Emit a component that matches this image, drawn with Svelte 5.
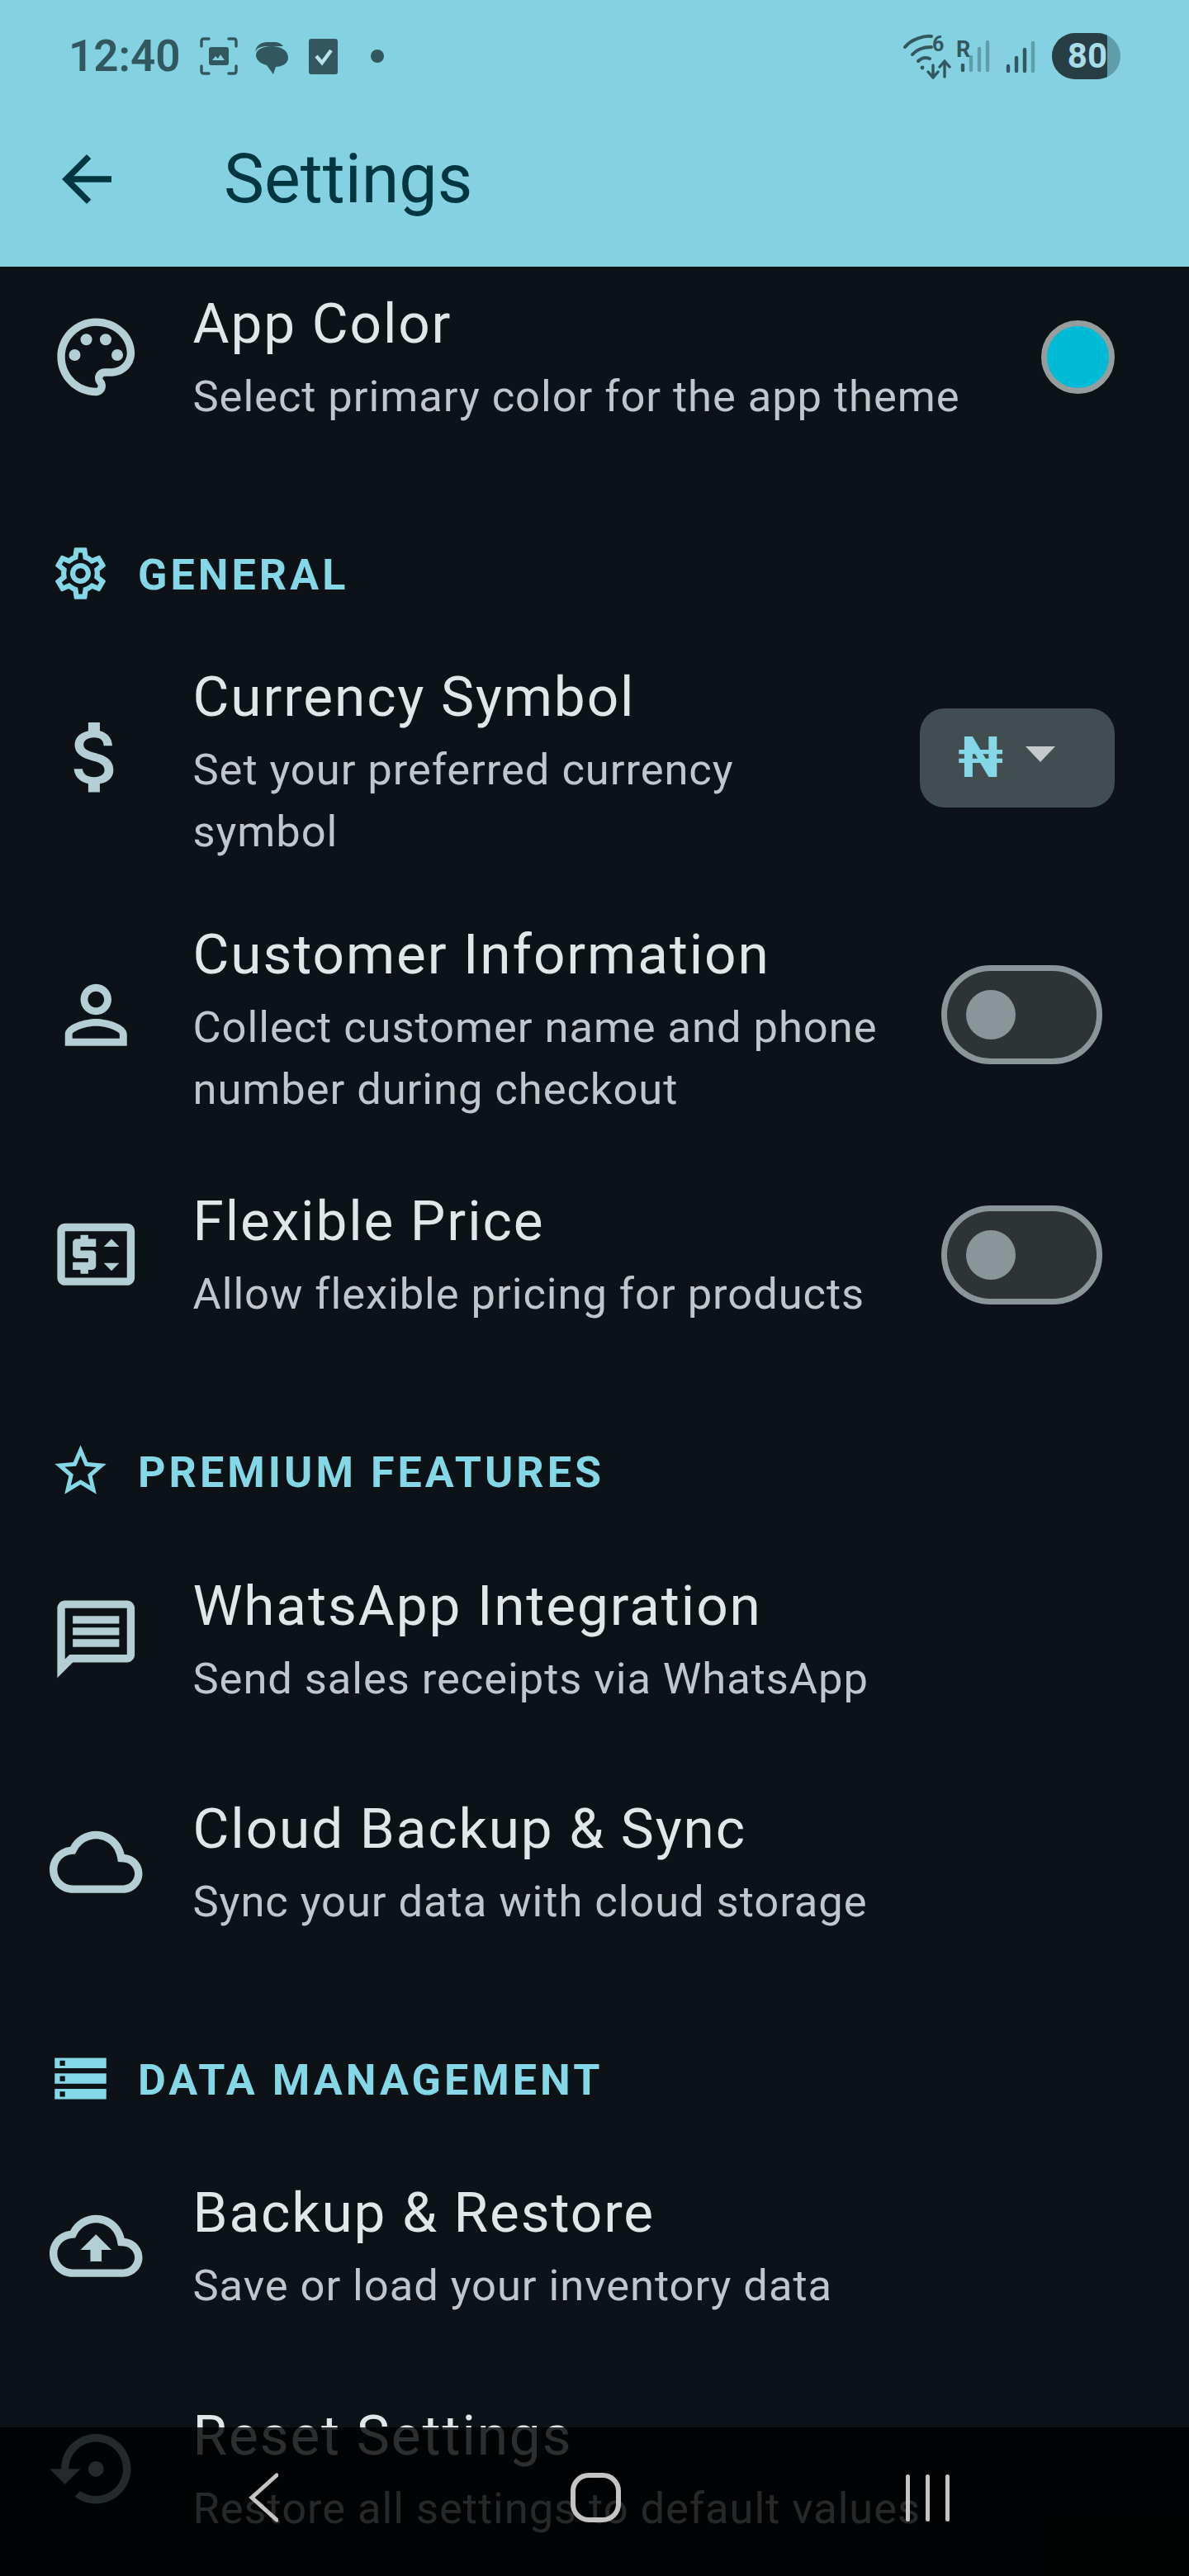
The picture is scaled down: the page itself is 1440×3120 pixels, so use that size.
<script>
  const P = {
    palette: 'M12 22C6.49 22 2 17.51 2 12S6.49 2 12 2s10 4.04 10 9c0 3.31-2.69 6-6 6h-1.77c-.28 0-.5.22-.5.5 0 .12.05.23.13.33.41.47.64 1.06.64 1.67 0 1.38-1.12 2.5-2.5 2.5zm0-18c-4.41 0-8 3.59-8 8s3.59 8 8 8c.28 0 .5-.22.5-.5 0-.16-.08-.28-.14-.35-.41-.46-.63-1.05-.63-1.65 0-1.38 1.12-2.5 2.5-2.5H16c2.21 0 4-1.79 4-4 0-3.86-3.59-7-8-7zM6.5 10a1.5 1.5 0 1 0 0 3 1.5 1.5 0 0 0 0-3zM9.5 6a1.5 1.5 0 1 0 0 3 1.5 1.5 0 0 0 0-3zM14.5 6a1.5 1.5 0 1 0 0 3 1.5 1.5 0 0 0 0-3zM17.5 10a1.5 1.5 0 1 0 0 3 1.5 1.5 0 0 0 0-3z',
    money: 'M11.8 10.9c-2.27-.59-3-1.2-3-2.15 0-1.09 1.01-1.85 2.7-1.85 1.78 0 2.44.85 2.5 2.1h2.21c-.07-1.72-1.12-3.3-3.21-3.81V3h-3v2.16c-1.94.42-3.5 1.68-3.5 3.61 0 2.31 1.91 3.46 4.7 4.13 2.5.6 3 1.48 3 2.41 0 .69-.49 1.79-2.7 1.79-2.06 0-2.87-.92-2.98-2.1h-2.2c.12 2.19 1.76 3.42 3.68 3.83V21h3v-2.15c1.95-.37 3.5-1.5 3.5-3.55 0-2.84-2.43-3.81-4.7-4.4z',
    person: 'M12 5.9c1.16 0 2.1.94 2.1 2.1s-.94 2.1-2.1 2.1S9.9 9.16 9.9 8s.94-2.1 2.1-2.1m0 9c2.97 0 6.1 1.46 6.1 2.1v1.1H5.9V17c0-.64 3.13-2.1 6.1-2.1M12 4C9.79 4 8 5.79 8 8s1.79 4 4 4 4-1.79 4-4-1.79-4-4-4zm0 9c-2.67 0-8 1.34-8 4v3h16v-3c0-2.66-5.33-4-8-4z',
    price: 'M8 17h2v-1h1c.55 0 1-.45 1-1v-3c0-.55-.45-1-1-1H8v-1h4V8h-2V7H8v1H7c-.55 0-1 .45-1 1v3c0 .55.45 1 1 1h3v1H6v2h2v1zM20 4H4c-1.11 0-2 .89-2 2v12c0 1.11.89 2 2 2h16c1.11 0 2-.89 2-2V6c0-1.11-.89-2-2-2zm0 14H4V6h16v12zM14 10l2-2 2 2h-4zm4 4.25l-2 2-2-2h4z',
    message: 'M20 2H4c-1.1 0-2 .9-2 2v18l4-4h14c1.1 0 2-.9 2-2V4c0-1.1-.9-2-2-2zm0 14H5.17L4 17.17V4h16v12zM6 12h12v2H6zm0-3h12v2H6zm0-3h12v2H6z',
    cloud: 'M12 6c2.62 0 4.88 1.86 5.39 4.43l.3 1.5 1.53.11c1.56.1 2.78 1.41 2.78 2.96 0 1.65-1.35 3-3 3H6c-2.21 0-4-1.79-4-4 0-2.05 1.53-3.76 3.56-3.97l1.07-.11.5-.95C8.08 7.14 9.94 6 12 6m0-2C9.11 4 6.6 5.64 5.35 8.04 2.34 8.36 0 10.91 0 14c0 3.31 2.69 6 6 6h13c2.76 0 5-2.24 5-5 0-2.64-2.05-4.78-4.65-4.96C18.67 6.59 15.64 4 12 4z',
    upload: 'M12 6c2.62 0 4.88 1.86 5.39 4.43l.3 1.5 1.53.11c1.56.1 2.78 1.41 2.78 2.96 0 1.65-1.35 3-3 3H6c-2.21 0-4-1.79-4-4 0-2.05 1.53-3.76 3.56-3.97l1.07-.11.5-.95C8.08 7.14 9.94 6 12 6m0-2C9.11 4 6.6 5.64 5.35 8.04 2.34 8.36 0 10.91 0 14c0 3.31 2.69 6 6 6h13c2.76 0 5-2.24 5-5 0-2.64-2.05-4.78-4.65-4.96C18.67 6.59 15.64 4 12 4zM8 13h2.55v3h2.9v-3H16l-4-4z',
    restore: 'M14 12c0-1.1-.9-2-2-2s-2 .9-2 2 .9 2 2 2 2-.9 2-2zm-2-9c-4.97 0-9 4.03-9 9H0l4 4 4-4H5c0-3.87 3.13-7 7-7s7 3.13 7 7-3.13 7-7 7c-1.51 0-2.91-.49-4.06-1.3l-1.42 1.44C8.04 20.3 9.94 21 12 21c4.97 0 9-4.03 9-9s-4.03-9-9-9z',
    gear: 'M19.43 12.98c.04-.32.07-.64.07-.98 0-.34-.03-.66-.07-.98l2.11-1.65c.19-.15.24-.42.12-.64l-2-3.46c-.09-.16-.26-.25-.44-.25-.06 0-.12.01-.17.03l-2.49 1c-.52-.4-1.08-.73-1.69-.98l-.38-2.65C14.46 2.18 14.25 2 14 2h-4c-.25 0-.46.18-.49.42l-.38 2.65c-.61.25-1.17.59-1.69.98l-2.49-1c-.06-.02-.12-.03-.18-.03-.17 0-.34.09-.43.25l-2 3.46c-.13.22-.07.49.12.64l2.11 1.65c-.04.32-.07.65-.07.98 0 .33.03.66.07.98l-2.11 1.65c-.19.15-.24.42-.12.64l2 3.46c.09.16.26.25.44.25.06 0 .12-.01.17-.03l2.49-1c.52.4 1.08.73 1.69.98l.38 2.65c.03.24.24.42.49.42h4c.25 0 .46-.18.49-.42l.38-2.65c.61-.25 1.17-.59 1.69-.98l2.49 1c.06.02.12.03.18.03.17 0 .34-.09.43-.25l2-3.46c.12-.22.07-.49-.12-.64l-2.11-1.65zm-1.98-1.71c.04.31.05.52.05.73 0 .21-.02.43-.05.73l-.14 1.13.89.7 1.08.84-.7 1.21-1.27-.51-1.04-.42-.9.68c-.43.32-.84.56-1.25.73l-1.06.43-.16 1.13-.2 1.35h-1.4l-.19-1.35-.16-1.13-1.06-.43c-.43-.18-.83-.41-1.23-.71l-.91-.7-1.06.43-1.27.51-.7-1.21 1.08-.84.89-.7-.14-1.13c-.03-.31-.05-.54-.05-.74s.02-.43.05-.73l.14-1.13-.89-.7-1.08-.84.7-1.21 1.27.51 1.04.42.9-.68c.43-.32.84-.56 1.25-.73l1.06-.43.16-1.13.2-1.35h1.39l.19 1.35.16 1.13 1.06.43c.43.18.83.41 1.23.71l.91.7 1.06-.43 1.27-.51.7 1.21-1.07.85-.89.7.14 1.13zM12 8c-2.21 0-4 1.79-4 4s1.79 4 4 4 4-1.79 4-4-1.79-4-4-4zm0 6c-1.1 0-2-.9-2-2s.9-2 2-2 2 .9 2 2-.9 2-2 2z',
    star: 'M22 9.24l-7.19-.62L12 2 9.19 8.63 2 9.24l5.46 4.73L5.82 21 12 17.27 18.18 21l-1.63-7.03L22 9.24zM12 15.4l-3.76 2.27 1-4.28-3.32-2.88 4.38-.38L12 6.1l1.71 4.04 4.38.38-3.32 2.88 1 4.28L12 15.4z',
    storage: 'M2 20h20v-4H2v4zm2-3h2v2H4v-2zM2 4v4h20V4H2zm4 3H4V5h2v2zm-4 7h20v-4H2v4zm2-3h2v2H4v-2z',
    back: 'M20 11H7.83l5.59-5.59L12 4l-8 8 8 8 1.41-1.41L7.83 13H20v-2z'
  };

  const groups = [
    { rows: [
      { icon: 'palette', title: 'App Color', sub: 'Select primary color for the app theme', trail: 'dot', cls: 'plain' }
    ]},
    { head: 'GENERAL', icon: 'gear', rows: [
      { icon: 'money', title: 'Currency Symbol', sub: 'Set your preferred currency symbol', trail: 'drop', cls: 'currency tall' },
      { icon: 'person', title: 'Customer Information', sub: 'Collect customer name and phone number during checkout', trail: 'switch', cls: 'customer tall' },
      { icon: 'price', title: 'Flexible Price', sub: 'Allow flexible pricing for products', trail: 'switch', cls: 'flexible' }
    ]},
    { head: 'PREMIUM FEATURES', icon: 'star', rows: [
      { icon: 'message', title: 'WhatsApp Integration', sub: 'Send sales receipts via WhatsApp', cls: 'plain' },
      { icon: 'cloud', title: 'Cloud Backup & Sync', sub: 'Sync your data with cloud storage', cls: 'plain' }
    ]},
    { head: 'DATA MANAGEMENT', icon: 'storage', rows: [
      { icon: 'upload', title: 'Backup & Restore', sub: 'Save or load your inventory data', cls: 'plain' },
      { icon: 'restore', title: 'Reset Settings', sub: 'Restore all settings to default values', cls: 'plain' }
    ]}
  ];
</script>

<div class="page">
  <header class="top">
    <div class="status">
      <span class="time">12:40</span>
      <svg class="s-shot" viewBox="0 0 46 46" fill="none" stroke="currentColor" stroke-width="3.4" stroke-linecap="round">
        <path d="M2 11V5q0-3 3-3h6M35 2h6q3 0 3 3v6M44 35v6q0 3-3 3h-6M11 44H5q-3 0-3-3v-6"/>
        <rect x="11" y="12" width="24" height="22" rx="3" fill="currentColor" stroke="none"/>
        <path d="M15 28l4-5 3 3 3-5 5 7z" fill="#84d2e1" stroke="none"/>
      </svg>
      <svg class="s-chat" viewBox="0 0 41 40" fill="currentColor">
        <path d="M1 13C2 5 8 1 16 1h8c5 0 9 2 11 5H16C8 6 3 8 1 13z"/>
        <path d="M21 6c11 0 20 5 20 14 0 7-8 11-15 11l-3 9-8-11C7 27 2 22 2 17 2 10 10 6 21 6z"/>
      </svg>
      <svg class="s-check" viewBox="0 0 35 43">
        <rect width="35" height="43" rx="3" fill="currentColor"/>
        <path d="M9 21l7 8 11-15" fill="none" stroke="#b9e3ec" stroke-width="4.4"/>
      </svg>
      <span class="s-dot"></span>
      <span class="grow"></span>
      <div class="s-wifi">
        <svg viewBox="0 0 58 56" fill="none" stroke="currentColor" stroke-linecap="round">
          <path d="M2 17C10 7 26 3 34 4" stroke-width="4"/>
          <path d="M11 26C17 19 26 17 34 17" stroke-width="4"/>
          <path d="M18 34c4-4 9-5 14-3" stroke-width="4"/>
          <circle cx="23" cy="42" r="2.4" fill="currentColor" stroke="none"/>
          <path d="M36 39v15M30 47l6 7 6-7M50 53V34M44 41l6-7 6 7" stroke-width="3.4"/>
        </svg>
        <span class="wifi-6">6</span>
      </div>
      <div class="s-sim">
        <span class="sim-r">R</span>
        <svg viewBox="0 0 36 40" stroke-linecap="round" stroke-width="4.4" fill="none">
          <path d="M3 36v-6" stroke="currentColor"/>
          <path d="M13 36V20M23 36V10M33 36V2" stroke="#5f9daa"/>
        </svg>
      </div>
      <svg class="s-bars" viewBox="0 0 37 39" stroke-linecap="round" stroke-width="4.4" fill="none">
        <path d="M3 36v-6M13 36V20M23 36V10" stroke="currentColor"/>
        <path d="M33 36V2" stroke="#5f9daa"/>
      </svg>
      <div class="s-batt"><span class="batt-fill"><span>80</span></span></div>
    </div>
    <div class="appbar">
      <svg class="back" viewBox="0 0 24 24"><path d={P.back}/></svg>
      <h1>Settings</h1>
    </div>
  </header>

  <main class="scroll">
    <div class="list">
      {#each groups as g}
        {#if g.head}
          <div class="section">
            <svg class="sec-icon" viewBox="0 0 24 24"><path d={P[g.icon]}/></svg>
            <span class="sec-label">{g.head}</span>
          </div>
        {/if}
        {#each g.rows as r}
          <div class="row {r.cls}">
            <svg class="row-icon" viewBox="0 0 24 24"><path d={P[r.icon]} fill-rule="evenodd"/></svg>
            <div class="text">
              <div class="title">{r.title}</div>
              <div class="sub">{r.sub}</div>
            </div>
            {#if r.trail === 'dot'}
              <span class="color-dot"></span>
            {:else if r.trail === 'drop'}
              <div class="drop"><span class="naira">₦</span><span class="caret"></span></div>
            {:else if r.trail === 'switch'}
              <span class="switch"><span class="thumb"></span></span>
            {/if}
          </div>
        {/each}
      {/each}
    </div>
  </main>

  <nav class="nav">
    <svg class="n-back" viewBox="0 0 36 60" fill="none" stroke="currentColor" stroke-width="5" stroke-linecap="round"><path d="M34 3L4 30l30 27"/></svg>
    <span class="n-home"></span>
    <div class="n-rec"><span></span><span></span><span></span></div>
  </nav>
</div>

<style>
  :global(body) { margin: 0; background: #0c1215; }
  .page {
    position: relative; width: 1440px; height: 3120px; overflow: hidden;
    display: flex; flex-direction: column;
    background: #0c1215; font-family: Roboto, "Liberation Sans", sans-serif;
  }
  .top { position: relative; z-index: 2; height: 323px; background: #84d2e1; flex: none; }
  .status { display: flex; align-items: center; height: 136px; padding: 0 83px 0 83px; color: #32575f; box-sizing: border-box; }
  .time { font-size: 53px; font-weight: 600; line-height: 1; width: 159px; flex: none; }
  .s-shot { width: 46px; height: 46px; flex: none; }
  .s-chat { width: 41px; height: 40px; margin-left: 20px; margin-top: 4px; flex: none; }
  .s-check { width: 35px; height: 43px; margin-left: 25px; flex: none; }
  .s-dot { width: 16px; height: 16px; border-radius: 50%; background: currentColor; margin-left: 40px; flex: none; }
  .grow { flex: 1; }
  .s-wifi { position: relative; width: 58px; height: 56px; flex: none; }
  .s-wifi svg { width: 58px; height: 56px; display: block; }
  .wifi-6 { position: absolute; left: 35px; top: 0; font-size: 25px; font-weight: 700; line-height: 28px; }
  .s-sim { position: relative; width: 36px; height: 40px; margin-left: 11px; flex: none; margin-top: 2px; }
  .s-sim svg { width: 36px; height: 40px; display: block; }
  .sim-r { position: absolute; left: -5px; top: -2px; font-size: 27px; font-weight: 700; line-height: 26px; }
  .s-bars { width: 37px; height: 39px; margin-left: 19px; margin-top: 2px; flex: none; }
  .s-batt { width: 83px; height: 56px; margin-left: 19px; border-radius: 28px; background: #5f9daa; overflow: hidden; flex: none; }
  .batt-fill { display: flex; align-items: center; justify-content: flex-end; width: 67px; height: 56px; background: #273e45; color: #a6dde8; font-size: 42px; font-weight: 700; line-height: 1; overflow: hidden; }
  .appbar { display: flex; align-items: center; height: 162px; padding-left: 60px; color: #00363f; }
  .back { width: 90px; height: 90px; fill: currentColor; flex: none; }
  h1 { margin: 0 0 0 121px; font-size: 82.5px; font-weight: 400; line-height: 1; }

  .scroll { flex: 1; overflow: hidden; min-height: 0; }
  .list { margin-top: -25.5px; }

  .section {
    display: flex; align-items: center; height: 75px; padding: 89.5px 60px 31px;
    color: #84d7e6; font-size: 52px; font-weight: 700; letter-spacing: 4.05px;
  }
  .sec-label { padding-top: 4px; }
  .sec-icon { width: 75px; height: 75px; fill: currentColor; flex: none; margin-right: 32px; }

  .row { display: flex; align-items: center; padding: 49.5px 90px 49.5px 60px; }
  .row.currency { padding-top: 27.5px; padding-bottom: 28.75px; }
  .row.customer { padding-top: 27.75px; padding-bottom: 38px; }
  .row.customer .text { margin-top: 10px; }
  .row.flexible { padding-top: 39px; padding-bottom: 49.5px; }
  .row-icon { width: 112.5px; height: 112.5px; fill: #b3cfd5; flex: none; margin-right: 61px; }
  .text { flex: 1; min-width: 0; }
  .tall .text { margin-top: 8px; }
  .title { font-size: 67.5px; line-height: 90px; letter-spacing: 1.9px; color: #e1e6e8; margin-bottom: 6px; }
  .sub { font-size: 52.5px; line-height: 75px; letter-spacing: 0.94px; color: #bec8ca; }

  .color-dot { width: 75px; height: 75px; border: 7.5px solid #979c9c; border-radius: 50%; background: #00bbd6; flex: none; }
  .drop {
    display: flex; align-items: center; width: 236px; height: 120px; border-radius: 30px;
    background: #414d4e; flex: none; box-sizing: border-box; padding-left: 46px; margin-left: 60px;
  }
  .naira { color: #84d7e6; font-size: 68px; font-weight: 700; line-height: 1; }
  .caret { width: 0; height: 0; border-left: 18.5px solid transparent; border-right: 18.5px solid transparent; border-top: 19px solid #c5c9ca; margin-left: 27px; margin-top: -8px; }
  .switch {
    display: flex; align-items: center; box-sizing: border-box; width: 195px; height: 120px;
    border: 7.5px solid #899596; border-radius: 60px; background: #2e3335; padding-left: 22.5px;
    margin: 0 15px 0 60px; flex: none;
  }
  .thumb { width: 60px; height: 60px; border-radius: 50%; background: #899596; }

  .nav {
    position: absolute; left: 0; right: 0; bottom: 0; height: 180px; z-index: 3;
    background: rgba(0, 0, 0, 0.8); color: #c4c4c4;
    display: flex; align-items: flex-start; padding: 55px 0 0 301px; box-sizing: border-box;
  }
  .n-back { width: 36px; height: 60px; flex: none; }
  .n-home { width: 61px; height: 60px; box-sizing: border-box; border: 6px solid currentColor; border-radius: 22px; margin-left: 354px; flex: none; }
  .n-rec { display: flex; gap: 19px; margin-left: 345px; margin-top: 2px; }
  .n-rec span { width: 5px; height: 57px; border-radius: 3px; background: currentColor; }
</style>
